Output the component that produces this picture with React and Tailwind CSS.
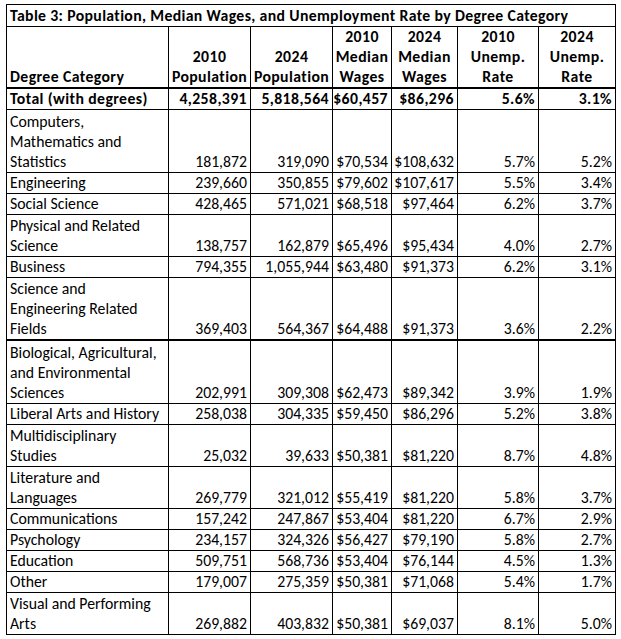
import React from 'react';

const cols = 'grid-cols-[162px_82px_82px_59px_66px_81px_77px]';

const rows = [
  { name: ['Total (with degrees)'], v: ['4,258,391', '5,818,564', '$60,457', '$86,296', '5.6%', '3.1%'], bold: true, h: 'h-[21px]' },
  { name: ['Computers,', 'Mathematics and', 'Statistics'], v: ['181,872', '319,090', '$70,534', '$108,632', '5.7%', '5.2%'], h: 'h-[63px]' },
  { name: ['Engineering'], v: ['239,660', '350,855', '$79,602', '$107,617', '5.5%', '3.4%'], h: 'h-[21px]' },
  { name: ['Social Science'], v: ['428,465', '571,021', '$68,518', '$97,464', '6.2%', '3.7%'], h: 'h-[21px]' },
  { name: ['Physical and Related', 'Science'], v: ['138,757', '162,879', '$65,496', '$95,434', '4.0%', '2.7%'], h: 'h-[42px]' },
  { name: ['Business'], v: ['794,355', '1,055,944', '$63,480', '$91,373', '6.2%', '3.1%'], h: 'h-[21px]' },
  { name: ['Science and', 'Engineering Related', 'Fields'], v: ['369,403', '564,367', '$64,488', '$91,373', '3.6%', '2.2%'], h: 'h-[63px]', thick: true },
  { name: ['Biological, Agricultural,', 'and Environmental', 'Sciences'], v: ['202,991', '309,308', '$62,473', '$89,342', '3.9%', '1.9%'], h: 'h-[63px]' },
  { name: ['Liberal Arts and History'], v: ['258,038', '304,335', '$59,450', '$86,296', '5.2%', '3.8%'], h: 'h-[21px]' },
  { name: ['Multidisciplinary', 'Studies'], v: ['25,032', '39,633', '$50,381', '$81,220', '8.7%', '4.8%'], h: 'h-[42px]' },
  { name: ['Literature and', 'Languages'], v: ['269,779', '321,012', '$55,419', '$81,220', '5.8%', '3.7%'], h: 'h-[42px]' },
  { name: ['Communications'], v: ['157,242', '247,867', '$53,404', '$81,220', '6.7%', '2.9%'], h: 'h-[21px]' },
  { name: ['Psychology'], v: ['234,157', '324,326', '$56,427', '$79,190', '5.8%', '2.7%'], h: 'h-[21px]' },
  { name: ['Education'], v: ['509,751', '568,736', '$53,404', '$76,144', '4.5%', '1.3%'], h: 'h-[21px]' },
  { name: ['Other'], v: ['179,007', '275,359', '$50,381', '$71,068', '5.4%', '1.7%'], h: 'h-[21px]' },
  { name: ['Visual and Performing', 'Arts'], v: ['269,882', '403,832', '$50,381', '$69,037', '8.1%', '5.0%'], h: 'h-[42px]' },
];

const headers = [
  ['2010', 'Population'],
  ['2024', 'Population'],
  ['2010', 'Median', 'Wages'],
  ['2024', 'Median', 'Wages'],
  ['2010', 'Unemp.', 'Rate'],
  ['2024', 'Unemp.', 'Rate'],
];

const App = () => {
  return (
    <div className="w-[621px] h-[639px] bg-white text-black font-['Carlito','Lato',sans-serif] text-[15.75px] leading-[20px]">
      <div className="pt-[4px] pl-[6px]">
        <div className={`grid ${cols} w-[610px] border-t border-l border-black`}>
          {/* Title */}
          <div className="col-span-7 h-[22px] border-r border-b border-black px-[3px] flex items-end font-bold tracking-[0.35px] whitespace-nowrap">
            Table 3: Population, Median Wages, and Unemployment Rate by Degree Category
          </div>

          {/* Header */}
          <div className="h-[62px] border-r border-b-2 border-black px-[3px] flex flex-col justify-end font-bold tracking-[0.4px]">
            Degree Category
          </div>
          {headers.map((h, i) => (
            <div key={i} className="h-[62px] border-r border-b-2 border-black flex flex-col justify-end items-center font-bold tracking-[0.4px]">
              {h.map(l => <span key={l} className="whitespace-nowrap">{l}</span>)}
            </div>
          ))}

          {/* Body */}
          {rows.map(r => (
            <React.Fragment key={r.name.join(' ')}>
              <div className={`${r.h} border-r border-black px-[3px] flex flex-col justify-end ${r.thick ? 'border-b-2' : 'border-b'} ${r.bold ? 'font-bold tracking-[0.4px]' : ''}`}>
                {r.name.map(l => <span key={l} className="whitespace-nowrap">{l}</span>)}
              </div>
              {r.v.map((v, i) => (
                <div key={i} className={`${r.h} border-r border-black pr-[3px] flex flex-col justify-end items-end ${r.thick ? 'border-b-2' : 'border-b'} ${r.bold ? 'font-bold tracking-[0.4px]' : ''}`}>
                  <span className="whitespace-nowrap">{v}</span>
                </div>
              ))}
            </React.Fragment>
          ))}
        </div>
      </div>
    </div>
  );
};

export default App;
